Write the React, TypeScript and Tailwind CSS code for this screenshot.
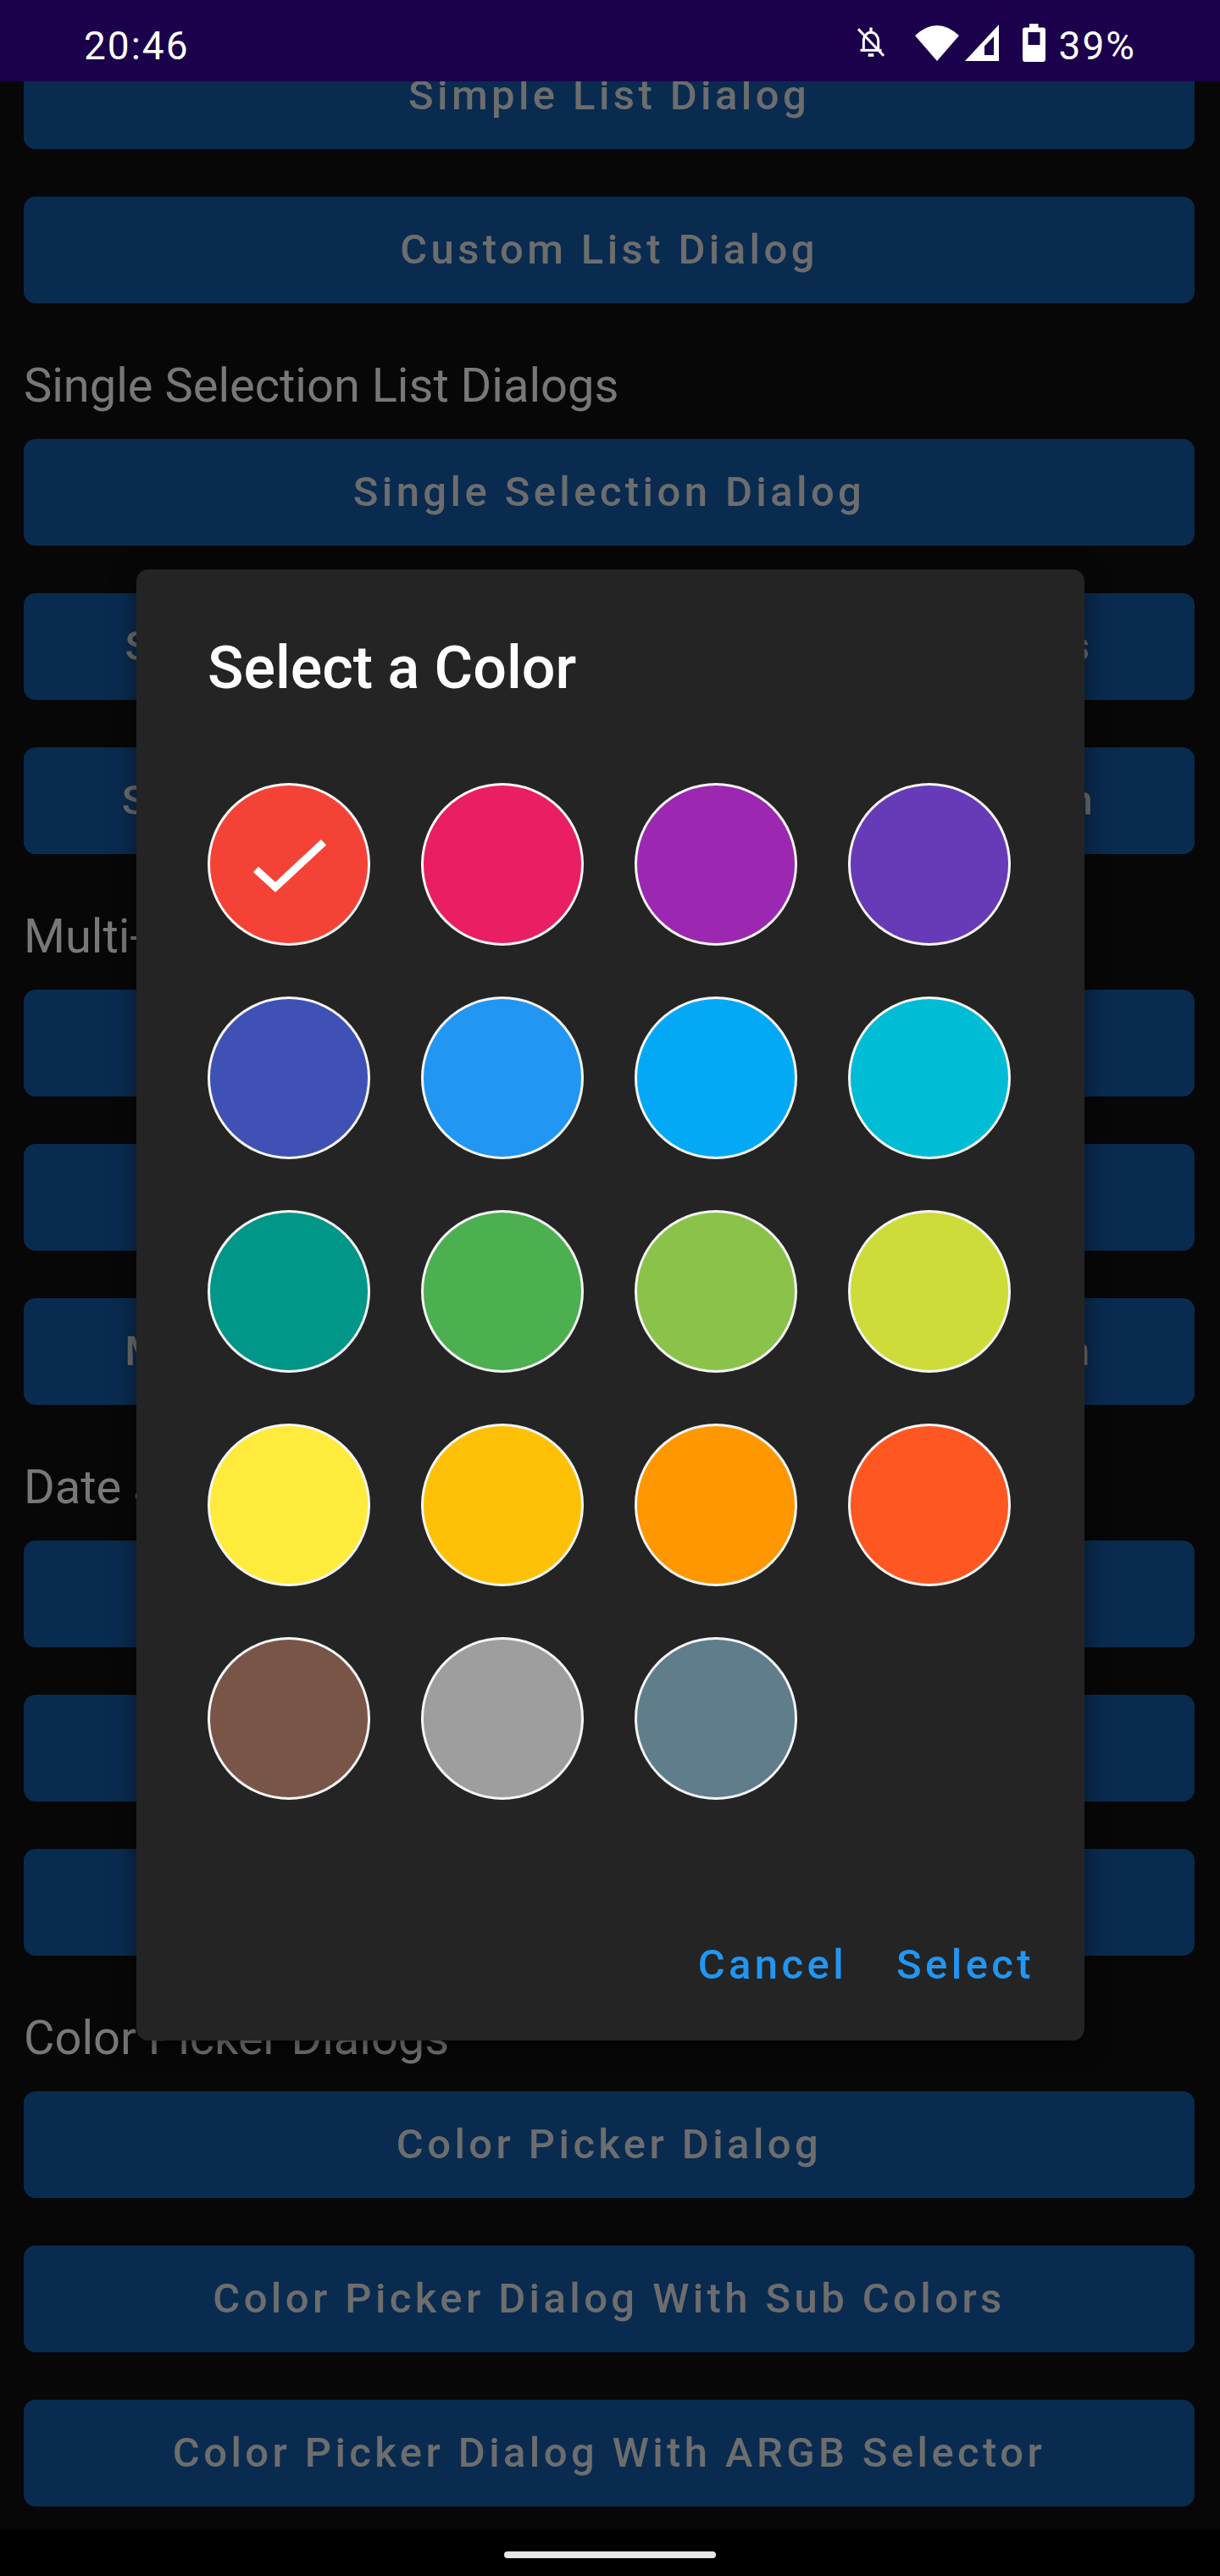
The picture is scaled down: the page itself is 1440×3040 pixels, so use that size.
import React from 'react'

const sections: { label?: string; buttons: string[] }[] = [
  { buttons: ['Simple List Dialog', 'Custom List Dialog'] },
  {
    label: 'Single Selection List Dialogs',
    buttons: [
      'Single Selection Dialog',
      'Single Selection Dialog With Selected Items',
      'Single Selection Dialog With Confirm Button',
    ],
  },
  {
    label: 'Multi-Selection List Dialogs',
    buttons: [
      'Multi Selection Dialog',
      'Multi Selection Dialog With Limit',
      'Multi Selection Dialog With Negative Button',
    ],
  },
  {
    label: 'Date and Time Picker Dialogs',
    buttons: ['Date Picker Dialog', 'Time Picker Dialog', 'Date Time Picker Dialog'],
  },
  {
    label: 'Color Picker Dialogs',
    buttons: [
      'Color Picker Dialog',
      'Color Picker Dialog With Sub Colors',
      'Color Picker Dialog With ARGB Selector',
    ],
  },
]

const swatches = [
  '#f44336',
  '#e91e63',
  '#9c27b0',
  '#673ab7',
  '#3f51b5',
  '#2196f3',
  '#03a9f4',
  '#00bcd4',
  '#009688',
  '#4caf50',
  '#8bc34a',
  '#cddc39',
  '#ffeb3b',
  '#ffc107',
  '#ff9800',
  '#ff5722',
  '#795548',
  '#9e9e9e',
  '#607d8b',
]

function StatusBar() {
  return (
    <div className="relative z-10 flex h-[96px] shrink-0 items-start justify-between bg-[#1b004b] pl-[99px] pr-[99px] text-white">
      <span className="mt-[31px] text-[46px] leading-[46px] tracking-[2px]">20:46</span>
      <div className="flex items-start">
        {/* notifications off */}
        <svg viewBox="0 0 24 24" className="mt-[30px] h-[40px] w-[42px]" fill="none" stroke="white" strokeWidth="1.8">
          <rect x="11" y="1.5" width="2" height="3" fill="white" stroke="none" />
          <path d="M6.8 16.8V11c0-3.3 2.2-6 5.2-6s5.2 2.7 5.2 6v5.8" />
          <path d="M4.5 17.6h15" />
          <path d="M10 21h4" strokeWidth="2.2" />
          <path d="M3 2.5l18 19" />
        </svg>
        {/* wifi */}
        <svg viewBox="0 0 52 42" className="ml-[31px] mt-[30px] h-[42px] w-[52px]">
          <path d="M26 42L0 12Q26 -12 52 12Z" fill="white" />
        </svg>
        {/* signal */}
        <svg viewBox="0 0 40 43" className="ml-[7px] mt-[29px] h-[43px] w-[40px]">
          <path d="M40 0V43H0ZM23 36H34V14L23 25.6Z" fill="white" fillRule="evenodd" />
        </svg>
        {/* battery */}
        <svg viewBox="0 0 27 45" className="ml-[28px] mt-[28px] h-[45px] w-[27px]">
          <rect x="8" y="0" width="10.5" height="6" fill="white" />
          <path
            d="M3 4.5h21a3 3 0 0 1 3 3v34.5a3 3 0 0 1-3 3h-21a3 3 0 0 1-3-3v-34.5a3 3 0 0 1 3-3zM6.5 10v15h14v-15z"
            fill="white"
            fillRule="evenodd"
          />
        </svg>
        <span className="ml-[16px] mt-[31px] text-[46px] leading-[46px] tracking-[2px]">39%</span>
      </div>
    </div>
  )
}

function ListButton({ text, spacing }: { text: string; spacing: 'none' | 'label' | 'button' }) {
  const margin = spacing === 'none' ? 'mt-0' : spacing === 'label' ? 'mt-[30px]' : 'mt-[56px]'
  return (
    <div
      className={`flex h-[126px] shrink-0 items-center justify-center whitespace-nowrap rounded-[14px] bg-[#0a2b50] text-[49px] font-medium tracking-[4.4px] text-[#6d6d6d] ${margin}`}>
      {text}
    </div>
  )
}

function ColorDialog() {
  return (
    <div className="absolute left-[161px] top-[672px] flex h-[1736px] w-[1119px] flex-col rounded-[14px] bg-[#242424] shadow-[0_8px_30px_rgba(0,0,0,0.5)]">
      <h2 className="pl-[84px] pt-[75px] text-[70px] font-medium leading-[82px] text-white">
        Select a Color
      </h2>
      <div className="ml-[84px] mt-[95px] grid grid-cols-[repeat(4,192px)] gap-[60px]">
        {swatches.map((color, i) => (
          <div
            key={color}
            className="flex size-[192px] items-center justify-center rounded-full border-[3px] border-[#f5f5f5]"
            style={{ backgroundColor: color }}>
            {i === 0 && (
              <svg viewBox="0 0 192 192" className="size-[192px] -m-[3px] shrink-0">
                <polyline
                  points="57,102 80,123 137,70"
                  fill="none"
                  stroke="white"
                  strokeWidth="9"
                  strokeLinejoin="miter"
                />
              </svg>
            )}
          </div>
        ))}
      </div>
      <div className="mt-auto flex justify-end gap-[2px] pb-[26px] pr-[31px]">
        {['Cancel', 'Select'].map((label) => (
          <button
            key={label}
            className="flex h-[126px] items-center px-[28px] text-[49px] font-medium tracking-[4.4px] text-[#2196f3]">
            {label}
          </button>
        ))}
      </div>
    </div>
  )
}

export default function App() {
  return (
    <div className="relative flex h-[3040px] w-[1440px] flex-col overflow-hidden bg-[#070707] font-['Roboto',sans-serif]">
      <StatusBar />
      <div className="min-h-0 flex-1 overflow-hidden">
        <div className="-mt-[46px] flex flex-col pl-[28px] pr-[30px]">
          {sections.map((section, si) => (
            <React.Fragment key={si}>
              {section.label && (
                <p className="mt-[64px] whitespace-nowrap text-[56px] leading-[66px] text-[#787878]">
                  {section.label}
                </p>
              )}
              {section.buttons.map((b, bi) => (
                <ListButton
                  key={b}
                  text={b}
                  spacing={bi > 0 ? 'button' : section.label ? 'label' : 'none'}
                />
              ))}
            </React.Fragment>
          ))}
        </div>
      </div>
      <div className="flex h-[56px] shrink-0 justify-center bg-black pt-[27px]">
        <div className="h-[8px] w-[250px] rounded-full bg-[#e6e6e6]" />
      </div>
      <ColorDialog />
    </div>
  )
}
